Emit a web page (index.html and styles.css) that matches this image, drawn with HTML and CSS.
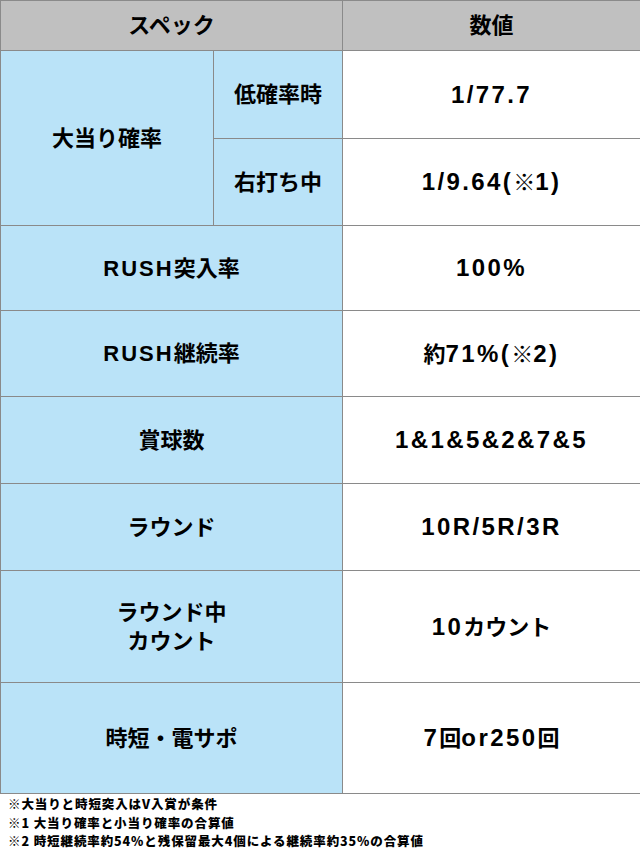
FILE: index.html
```html
<!DOCTYPE html>
<html lang="ja">
<head>
<meta charset="utf-8">
<link rel="stylesheet" href="styles.css">
</head>
<body>
<table class="spec">
  <colgroup><col class="c1"><col class="c2"><col class="c3"></colgroup>
  <tr class="r-head">
    <th colspan="2">スペック</th>
    <th>数値</th>
  </tr>
  <tr class="r-a">
    <td class="lbl" rowspan="2">大当り確率</td>
    <td class="lbl">低確率時</td>
    <td class="val"><span class="lat">1/77.7</span></td>
  </tr>
  <tr class="r-b">
    <td class="lbl">右打ち中</td>
    <td class="val"><span class="lat">1/9.64(</span>※<span class="lat">1)</span></td>
  </tr>
  <tr class="r-c">
    <td class="lbl" colspan="2"><span class="lat">RUSH</span>突入率</td>
    <td class="val"><span class="lat">100%</span></td>
  </tr>
  <tr class="r-d">
    <td class="lbl" colspan="2"><span class="lat">RUSH</span>継続率</td>
    <td class="val">約<span class="lat">71%(</span>※<span class="lat">2)</span></td>
  </tr>
  <tr class="r-e">
    <td class="lbl" colspan="2">賞球数</td>
    <td class="val"><span class="lat">1&amp;1&amp;5&amp;2&amp;7&amp;5</span></td>
  </tr>
  <tr class="r-f">
    <td class="lbl" colspan="2">ラウンド</td>
    <td class="val"><span class="lat">10R/5R/3R</span></td>
  </tr>
  <tr class="r-g">
    <td class="lbl two" colspan="2">ラウンド中<br>カウント</td>
    <td class="val"><span class="lat">10</span>カウント</td>
  </tr>
  <tr class="r-h">
    <td class="lbl" colspan="2">時短・電サポ</td>
    <td class="val"><span class="lat">7</span>回<span class="lat">or250</span>回</td>
  </tr>
</table>
<div class="notes">
  <p>※大当りと時短突入はV入賞が条件</p>
  <p>※1 大当り確率と小当り確率の合算値</p>
  <p>※2 時短継続率約54%と残保留最大4個による継続率約35%の合算値</p>
</div>
</body>
</html>
```

FILE: styles.css
```css
html, body {
  margin: 0;
  padding: 0;
  background: #ffffff;
}
body {
  width: 640px;
  font-family: "Liberation Sans", "Noto Sans CJK JP", sans-serif;
  font-weight: bold;
  color: #000;
}
.spec {
  border-collapse: collapse;
  width: 640px;
  table-layout: fixed;
}
.c1 { width: 213px; }
.c2 { width: 129px; }
.c3 { width: 298px; }
.spec th, .spec td {
  border: 1px solid #8a8a8a;
  padding: 0;
  text-align: center;
  vertical-align: middle;
  font-size: 22px;
  font-weight: bold;
  line-height: 29px;
}
.spec th {
  background: #c0c0c0;
  height: 49px;
}
.lbl { background: #bae3f8; }
.val { background: #ffffff; }
.lat { letter-spacing: 2px; }
.val .lat {
  font-size: 24px;
  letter-spacing: 2.4px;
}
.r-a td { height: 87px; }
.r-b td { height: 86px; }
.r-c td { height: 84px; }
.r-d td { height: 85px; }
.r-e td { height: 86px; }
.r-f td { height: 86px; }
.r-g td { height: 111px; }
.r-h td { height: 110px; }
.notes {
  padding: 1px 0 0 8px;
  font-family: "Noto Sans CJK JP", sans-serif;
  font-size: 12.5px;
  font-weight: 900;
  line-height: 18.5px;
  letter-spacing: 0.9px;
}
.notes p { margin: 0; white-space: pre; }
```
